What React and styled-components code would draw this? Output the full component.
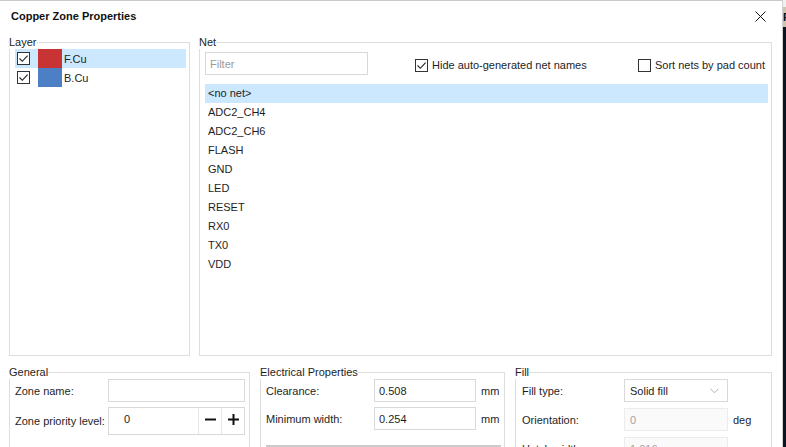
import React from "react";
import styled, { createGlobalStyle } from "styled-components";

const Global = createGlobalStyle`
  html, body { margin: 0; padding: 0; background: #ffffff; }
  body {
    font-family: "Liberation Sans", Arial, sans-serif;
    font-size: 11px;
    color: #1e1e1e;
  }
  * { box-sizing: border-box; }
`;

const Screen = styled.div`
  display: flex;
  width: 786px;
  height: 447px;
  overflow: hidden;
  background: #ffffff;
`;

const Dialog = styled.div`
  width: 783px;
  flex: none;
  height: 447px;
  border-top: 1px solid #c9c9c9;
  border-right: 1px solid #d2d2d2;
  display: flex;
  flex-direction: column;
  background: #ffffff;
`;

const Backdrop = styled.div`
  flex: 1;
  min-width: 0;
  overflow: hidden;
  display: flex;
  flex-direction: column;
  background: #0c1422;
`;

const BackdropTop = styled.div`
  height: 7px;
  background: #f0f0f0;
`;

const BackdropTab = styled.div`
  height: 20px;
  background: #cdc6ad;
  color: #111;
  font-weight: bold;
  font-size: 11px;
  line-height: 20px;
  overflow: hidden;
  white-space: nowrap;
`;

const TitleBar = styled.div`
  height: 30px;
  flex: none;
  display: flex;
  align-items: center;
  justify-content: space-between;
  padding: 0 16px 0 11px;
`;

const Title = styled.div`
  font-weight: bold;
  font-size: 11px;
  color: #111;
`;

const CloseIcon = styled.svg`
  width: 11px;
  height: 11px;
`;

const Body = styled.div`
  padding: 5px 10px 0 9px;
  display: flex;
  flex-direction: column;
`;

const Row = styled.div`
  display: flex;
  gap: ${(p) => p.$gap}px;
  height: ${(p) => p.$height}px;
  margin-top: ${(p) => p.$top || 0}px;
`;

const Group = styled.fieldset`
  margin: 0;
  padding: 0;
  min-width: 0;
  border: 1px solid #dedede;
  width: ${(p) => (p.$width ? `${p.$width}px` : "auto")};
  flex: ${(p) => (p.$width ? "none" : "1")};
`;

const Legend = styled.legend`
  padding: 0;
  margin-left: -1px;
  font-size: 11px;
  line-height: 13px;
  color: #1e1e1e;
`;

const GroupInner = styled.div`
  padding: ${(p) => p.$pad};
  display: flex;
  flex-direction: column;
  gap: ${(p) => p.$gap || 0}px;
`;

const LayerRow = styled.div`
  height: 19px;
  display: flex;
  align-items: center;
  background: ${(p) => (p.$selected ? "#cce8ff" : "transparent")};
`;

const CheckBox = styled.span`
  width: 13px;
  height: 13px;
  flex: none;
  border: 1px solid #333333;
  background: #ffffff;
  display: inline-flex;
  align-items: center;
  justify-content: center;
  margin-left: ${(p) => p.$ml || 0}px;
`;

const Swatch = styled.span`
  width: 24px;
  height: 19px;
  flex: none;
  background: ${(p) => p.$color};
  margin-left: 8px;
`;

const LayerName = styled.span`
  margin-left: 2px;
`;

const NetHeader = styled.div`
  display: flex;
  align-items: center;
  height: 23px;
  margin-top: 3px;
`;

const TextBox = styled.input`
  width: ${(p) => p.$width}px;
  height: 23px;
  flex: none;
  border: 1px solid ${(p) => (p.disabled ? "#ececec" : "#d9d9d9")};
  background: ${(p) => (p.disabled ? "#fafafa" : "#ffffff")};
  padding: 0 0 0 ${(p) => p.$pad ?? 4}px;
  margin: 0;
  font-family: inherit;
  font-size: 11px;
  color: ${(p) => (p.disabled ? "#a3a3a3" : "#1e1e1e")};
  outline: none;
  &::placeholder { color: #9a9a9a; }
`;

const CheckOption = styled.label`
  display: flex;
  align-items: center;
  gap: 4px;
  margin-left: ${(p) => (p.$auto ? "auto" : `${p.$ml}px`)};
  margin-right: ${(p) => p.$mr || 0}px;
  margin-top: 3px;
  white-space: nowrap;
`;

const NetList = styled.div`
  margin-top: 9px;
  display: flex;
  flex-direction: column;
`;

const NetRow = styled.div`
  height: 19px;
  line-height: 19px;
  padding-left: 3px;
  background: ${(p) => (p.$selected ? "#cce8ff" : "transparent")};
`;

const FormRow = styled.div`
  display: flex;
  align-items: center;
  height: ${(p) => p.$height || 23}px;
`;

const FieldLabel = styled.span`
  width: ${(p) => p.$width}px;
  flex: none;
  white-space: nowrap;
`;

const Unit = styled.span`
  margin-left: 5px;
`;

const Spin = styled.div`
  width: 137px;
  height: 28px;
  display: flex;
  border: 1px solid #d9d9d9;
`;

const SpinValue = styled.div`
  flex: 1;
  padding-left: 15px;
  display: flex;
  align-items: center;
  padding-bottom: 4px;
`;

const SpinButton = styled.div`
  width: 23px;
  flex: none;
  border-left: 1px solid #e6e6e6;
  display: flex;
  align-items: center;
  justify-content: center;
  padding-bottom: 4px;
`;

const Select = styled.div`
  width: 104px;
  height: 23px;
  border: 1px solid #d9d9d9;
  display: flex;
  align-items: center;
  justify-content: space-between;
  padding: 0 8px 0 5px;
`;

const Rule = styled.div`
  height: 3px;
  background: #cbcbcb;
  margin: 10px 3px 0 0;
`;

const Check = ({ checked, ml }) => (
  <CheckBox $ml={ml}>
    {checked && (
      <svg width="11" height="11" viewBox="0 0 11 11">
        <path d="M1.5 5.5 L4.3 8.3 L9.6 2.6" fill="none" stroke="#222" strokeWidth="1.1" />
      </svg>
    )}
  </CheckBox>
);

const nets = ["<no net>", "ADC2_CH4", "ADC2_CH6", "FLASH", "GND", "LED", "RESET", "RX0", "TX0", "VDD"];

export default function App() {
  return (
    <>
      <Global />
      <Screen>
        <Dialog>
          <TitleBar>
            <Title>Copper Zone Properties</Title>
            <CloseIcon viewBox="0 0 11 11">
              <path d="M0.5 0.5 L10.5 10.5 M10.5 0.5 L0.5 10.5" stroke="#111" strokeWidth="1" fill="none" />
            </CloseIcon>
          </TitleBar>
          <Body>
            <Row $gap={9} $height={320}>
              <Group $width={181}>
                <Legend>Layer</Legend>
                <GroupInner $pad="0 3px 0 5px">
                  <LayerRow $selected>
                    <Check checked ml={2} />
                    <Swatch $color="#c83434" />
                    <LayerName>F.Cu</LayerName>
                  </LayerRow>
                  <LayerRow>
                    <Check checked ml={2} />
                    <Swatch $color="#4d7fc4" />
                    <LayerName>B.Cu</LayerName>
                  </LayerRow>
                </GroupInner>
              </Group>
              <Group>
                <Legend>Net</Legend>
                <GroupInner $pad="0 3px 0 5px">
                  <NetHeader>
                    <TextBox $width={163} placeholder="Filter" readOnly />
                    <CheckOption $ml={47}>
                      <Check checked />
                      Hide auto-generated net names
                    </CheckOption>
                    <CheckOption $auto $mr={3}>
                      <Check />
                      Sort nets by pad count
                    </CheckOption>
                  </NetHeader>
                  <NetList>
                    {nets.map((n, i) => (
                      <NetRow key={n} $selected={i === 0}>
                        {n}
                      </NetRow>
                    ))}
                  </NetList>
                </GroupInner>
              </Group>
            </Row>
            <Row $gap={10} $height={100} $top={10}>
              <Group $width={241}>
                <Legend>General</Legend>
                <GroupInner $pad="0 4px 8px 5px" $gap={5}>
                  <FormRow>
                    <FieldLabel $width={93}>Zone name:</FieldLabel>
                    <TextBox $width={137} readOnly />
                  </FormRow>
                  <FormRow $height={28}>
                    <FieldLabel $width={93}>Zone priority level:</FieldLabel>
                    <Spin>
                      <SpinValue>0</SpinValue>
                      <SpinButton>
                        <svg width="11" height="11" viewBox="0 0 11 11">
                          <path d="M0 5.5 H11" stroke="#111" strokeWidth="2" />
                        </svg>
                      </SpinButton>
                      <SpinButton>
                        <svg width="11" height="11" viewBox="0 0 11 11">
                          <path d="M0 5.5 H11 M5.5 0 V11" stroke="#111" strokeWidth="2" />
                        </svg>
                      </SpinButton>
                    </Spin>
                  </FormRow>
                </GroupInner>
              </Group>
              <Group $width={245}>
                <Legend>Electrical Properties</Legend>
                <GroupInner $pad="0 0 0 5px" $gap={5}>
                  <FormRow>
                    <FieldLabel $width={108}>Clearance:</FieldLabel>
                    <TextBox $width={102} $pad={4} defaultValue="0.508" readOnly />
                    <Unit>mm</Unit>
                  </FormRow>
                  <FormRow>
                    <FieldLabel $width={108}>Minimum width:</FieldLabel>
                    <TextBox $width={102} $pad={4} defaultValue="0.254" readOnly />
                    <Unit>mm</Unit>
                  </FormRow>
                  <Rule />
                </GroupInner>
              </Group>
              <Group>
                <Legend>Fill</Legend>
                <GroupInner $pad="0 0 0 6px" $gap={6}>
                  <FormRow>
                    <FieldLabel $width={102}>Fill type:</FieldLabel>
                    <Select>
                      <span>Solid fill</span>
                      <svg width="9" height="6" viewBox="0 0 9 6">
                        <path d="M0.5 0.8 L4.5 4.8 L8.5 0.8" fill="none" stroke="#b0b0b0" strokeWidth="1" />
                      </svg>
                    </Select>
                  </FormRow>
                  <FormRow>
                    <FieldLabel $width={102}>Orientation:</FieldLabel>
                    <TextBox $width={104} $pad={5} defaultValue="0" disabled />
                    <Unit>deg</Unit>
                  </FormRow>
                  <FormRow>
                    <FieldLabel $width={102}>Hatch width:</FieldLabel>
                    <TextBox $width={104} $pad={5} defaultValue="1.016" disabled />
                    <Unit>mm</Unit>
                  </FormRow>
                </GroupInner>
              </Group>
            </Row>
          </Body>
        </Dialog>
        <Backdrop>
          <BackdropTop />
          <BackdropTab>F</BackdropTab>
        </Backdrop>
      </Screen>
    </>
  );
}
